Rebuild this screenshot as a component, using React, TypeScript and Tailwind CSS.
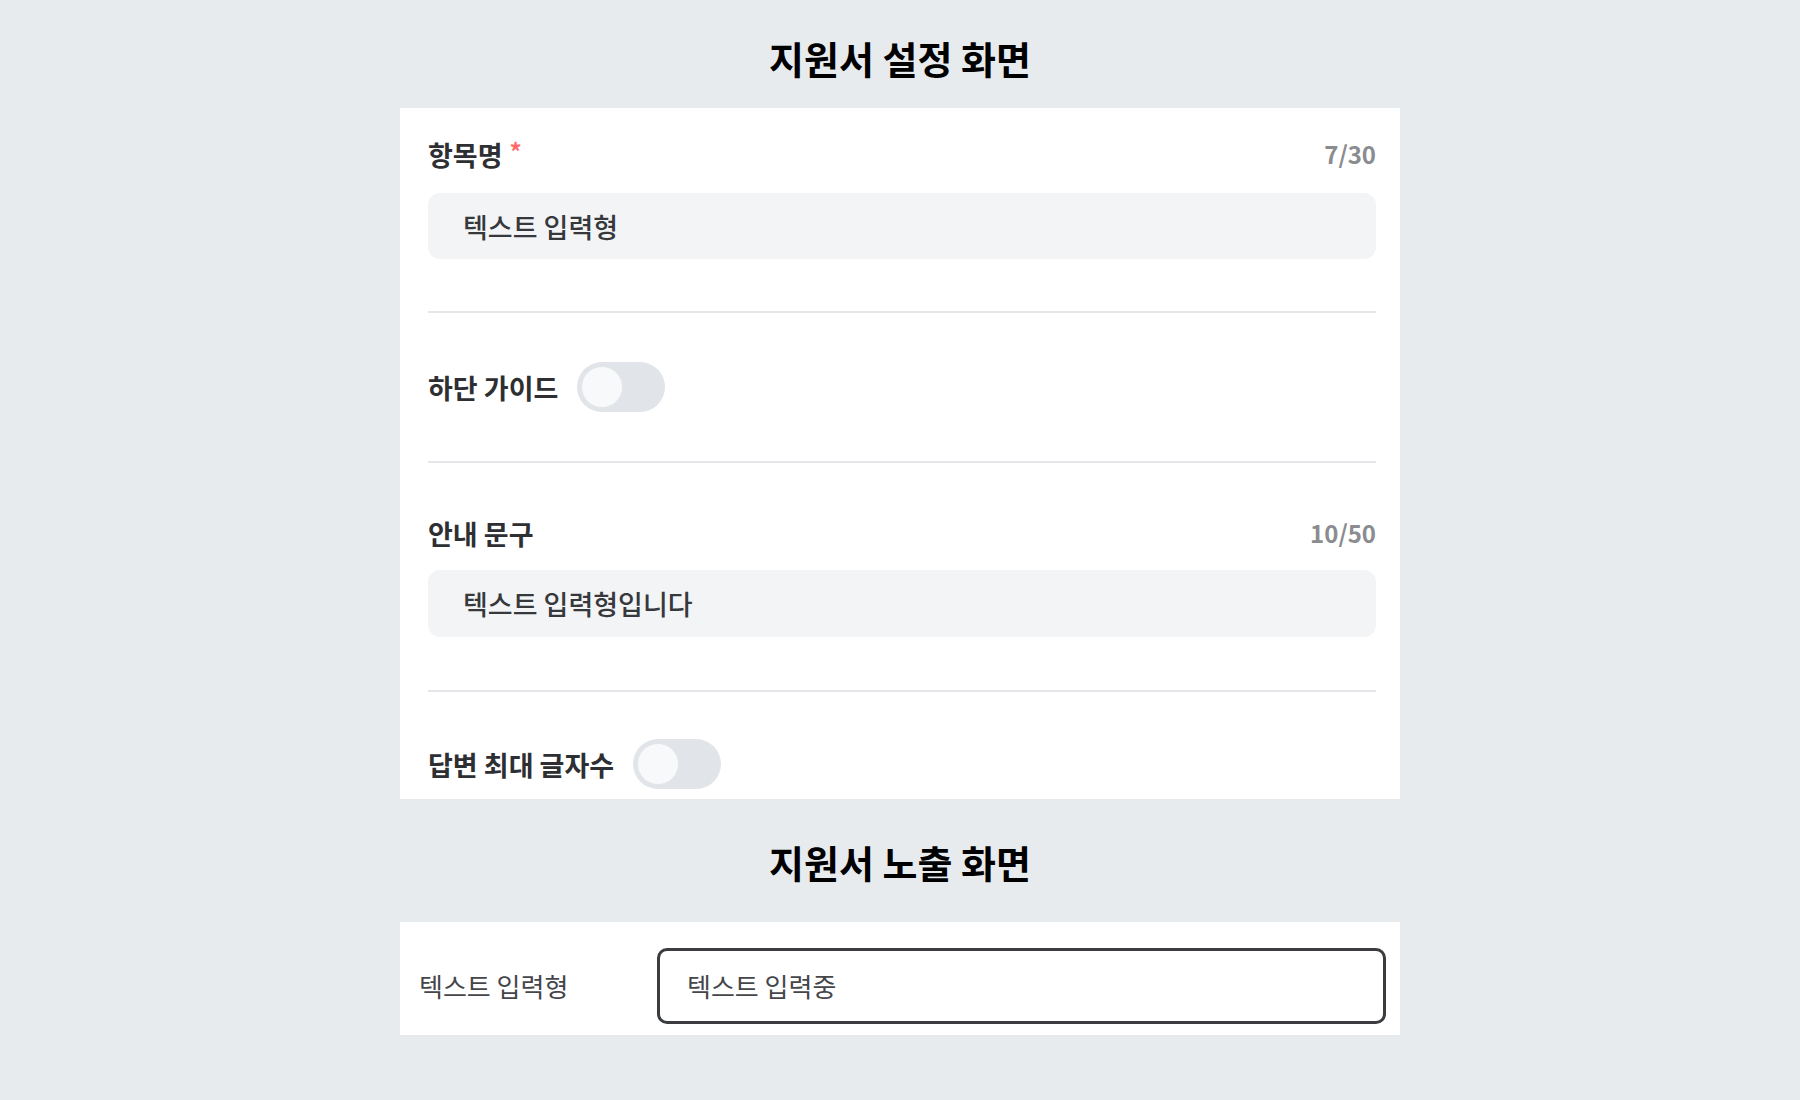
import React from 'react';

const FONT = { fontFamily: '"Noto Sans CJK KR", "Noto Sans", sans-serif' };

const Toggle: React.FC = () => (
  <div className="relative h-[50px] w-[88px] rounded-full bg-[#e1e4e8]">
    <div className="absolute left-[4px] top-[4px] h-[42px] w-[42px] rounded-full border border-[#e3e5e9] bg-[#f8f9fa]" />
  </div>
);

const Divider: React.FC<{ className?: string }> = ({ className }) => (
  <div className={`h-[2px] w-full bg-[#e4e6ea] ${className ?? ''}`} />
);

const FieldHeader: React.FC<{ label: string; count: string; required?: boolean }> = ({
  label,
  count,
  required,
}) => (
  <div className="flex h-[28px] items-center justify-between">
    <div className="flex items-center">
      <span className="text-[27px] font-bold leading-none text-[#2e2f33]">{label}</span>
      {required && (
        <span className="ml-[7px] -mt-[6px] text-[24px] font-bold leading-none text-[#ff6b6b]">*</span>
      )}
    </div>
    <span className="text-[24px] font-semibold leading-none text-[#8a8c90]">{count}</span>
  </div>
);

const FilledInput: React.FC<{ value: string; className?: string }> = ({ value, className }) => (
  <div className={`flex h-[66px] items-center rounded-[12px] bg-[#f3f4f6] pl-[35px] ${className ?? ''}`}>
    <span className="text-[27px] font-medium leading-none text-[#36383c]">{value}</span>
  </div>
);

const ToggleRow: React.FC<{ label: string; className?: string }> = ({ label, className }) => (
  <div className={`flex h-[50px] items-center gap-[19px] ${className ?? ''}`}>
    <span className="text-[27px] font-bold leading-none text-[#2e2f33]">{label}</span>
    <Toggle />
  </div>
);

export default function App() {
  return (
    <div className="min-h-screen w-full bg-[#e8ebee] pt-[27px]" style={FONT}>
      <div className="mx-auto flex w-[1000px] flex-col">
        <h1 className="flex h-[60px] items-center justify-center text-[38px] font-bold text-black">
          지원서 설정 화면
        </h1>

        {/* 설정 패널 */}
        <div className="mt-[21px] bg-white pl-7 pr-6 pt-[32px] pb-[10px]">
          <FieldHeader label="항목명" count="7/30" required />
          <FilledInput value="텍스트 입력형" className="mt-[25px]" />
          <Divider className="mt-[52px]" />
          <ToggleRow label="하단 가이드" className="mt-[49px]" />
          <Divider className="mt-[49px]" />
          <div className="mt-[56px]">
            <FieldHeader label="안내 문구" count="10/50" />
          </div>
          <FilledInput value="텍스트 입력형입니다" className="mt-[23px] h-[67px]" />
          <Divider className="mt-[53px]" />
          <ToggleRow label="답변 최대 글자수" className="mt-[47px]" />
        </div>

        <h2 className="mt-[32px] flex h-[60px] items-center justify-center text-[38px] font-bold text-black">
          지원서 노출 화면
        </h2>

        {/* 노출 패널 */}
        <div className="mt-[31px] flex items-center bg-white pl-[19px] pr-[14px] pt-[26px] pb-[11px]">
          <span className="w-[238px] shrink-0 text-[26px] leading-none text-[#44464a]">텍스트 입력형</span>
          <div className="flex h-[76px] flex-1 items-center rounded-[10px] border-[3px] border-[#3a3c40] pl-[27px]">
            <span className="text-[26px] leading-none text-[#44464a]">텍스트 입력중</span>
          </div>
        </div>
      </div>
    </div>
  );
}
